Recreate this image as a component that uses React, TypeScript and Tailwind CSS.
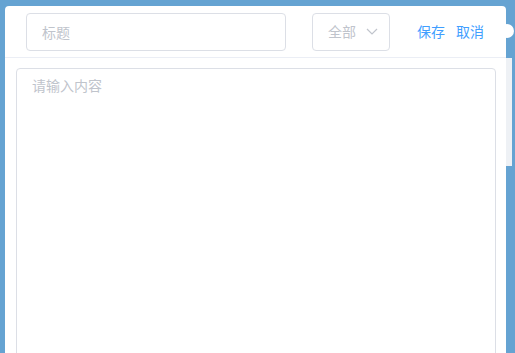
import React from "react";

const fieldStyles =
  "h-[38px] border border-[#dcdfe6] rounded-[4px] bg-white text-[14px] text-[#606266] outline-none placeholder:text-[#c0c4cc]";

const App = () => {
  return (
    <div
      className="relative w-[515px] h-[353px] overflow-hidden bg-[#65a3d2]"
      style={{ fontFamily: '"Noto Sans CJK SC", "Noto Sans", sans-serif' }}
    >
      {/* bits of the page behind the dialog */}
      <div className="absolute left-[500px] top-[24px] w-[14px] h-[14px] rounded-full bg-white" />
      <div className="absolute left-[505px] top-[58px] w-[7px] h-[108px] bg-[#eef1f5]" />

      <div className="relative ml-[5px] mt-[6px] w-[501px] h-[347px] bg-white rounded-t-[4px] flex flex-col">
        <div className="h-[52px] shrink-0 flex items-center border-b border-[#ebeef5] pl-[21px]">
          <input className={`${fieldStyles} w-[260px] px-[15px]`} placeholder="标题" />
          <div
            className={`${fieldStyles} ml-[26px] w-[78px] flex items-center justify-between pl-[15px] pr-[11px] text-[#c0c4cc]`}
          >
            <span>全部</span>
            <svg width="12" height="7" viewBox="0 0 12 7" fill="none">
              <path d="M1 1l5 5 5-5" stroke="#c0c4cc" strokeWidth="1.2" />
            </svg>
          </div>
          <span className="ml-[27px] text-[14px] text-[#409eff] cursor-pointer">保存</span>
          <span className="ml-[11px] text-[14px] text-[#409eff] cursor-pointer">取消</span>
        </div>
        <div className="flex-1 min-h-0 pt-[10px] pl-[11px] pr-[10px]">
          <textarea
            className="w-full h-[320px] resize-none border border-[#dcdfe6] rounded-[4px] px-[15px] pt-[6px] text-[14px] leading-[1.5] text-[#606266] outline-none placeholder:text-[#c0c4cc]"
            placeholder="请输入内容"
          />
        </div>
      </div>
    </div>
  );
};

export default App;
